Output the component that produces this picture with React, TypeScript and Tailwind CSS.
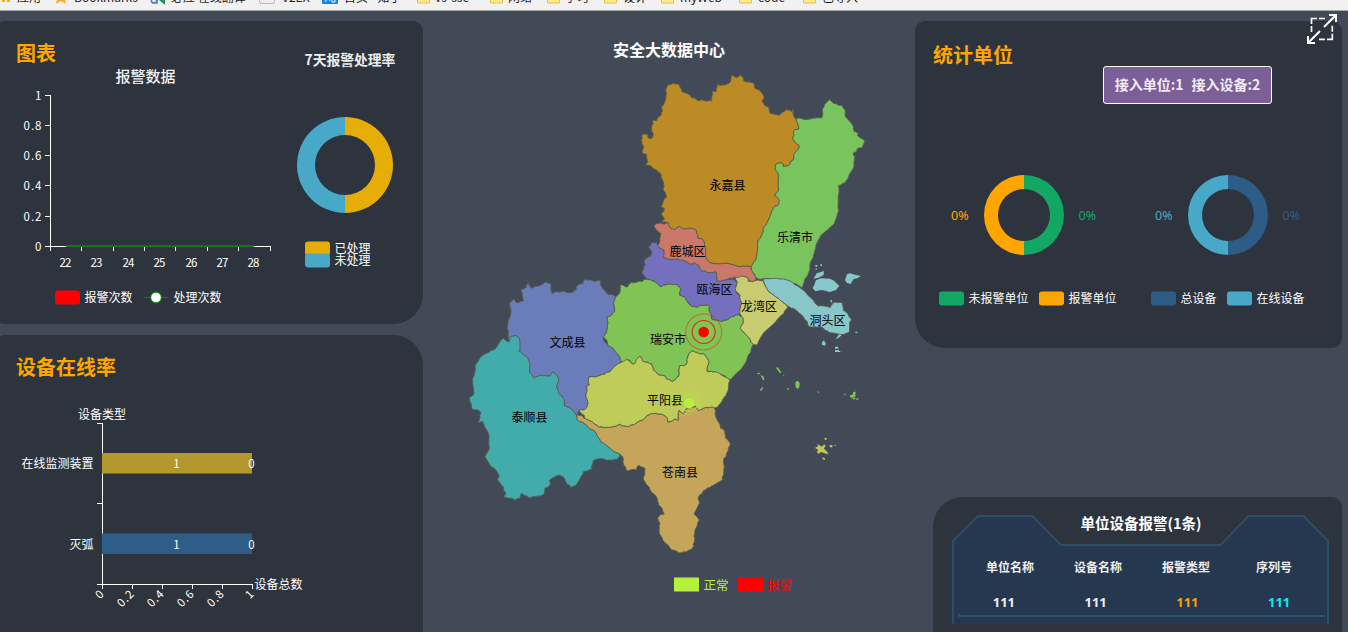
import React from "react";

const CJK = "font-['Noto_Sans_CJK_SC',sans-serif]";

/* ---------- bookmark bar ---------- */

type IconKind = "apps" | "star" | "bing" | "page" | "zhi" | "folder";

const bookmarks: { label: string; icon: IconKind; width: string; gap: string }[] = [
  { label: "应用", icon: "apps", width: "w-[54px]", gap: "gap-[5px]" },
  { label: "Bookmarks", icon: "star", width: "w-[96px]", gap: "gap-[6px]" },
  { label: "必应 在线翻译", icon: "bing", width: "w-[109px]", gap: "gap-[6px]" },
  { label: "V2EX", icon: "page", width: "w-[63px]", gap: "gap-[7px]" },
  { label: "首页 - 知乎", icon: "zhi", width: "w-[95px]", gap: "gap-[6px]" },
  { label: "vs-ssc", icon: "folder", width: "w-[73px]", gap: "gap-[5px]" },
  { label: "网络", icon: "folder", width: "w-[57px]", gap: "gap-[5px]" },
  { label: "学习", icon: "folder", width: "w-[57px]", gap: "gap-[5px]" },
  { label: "设计", icon: "folder", width: "w-[57px]", gap: "gap-[6px]" },
  { label: "myWeb", icon: "folder", width: "w-[78px]", gap: "gap-[6px]" },
  { label: "code", icon: "folder", width: "w-[64px]", gap: "gap-[6px]" },
  { label: "已导入", icon: "folder", width: "w-[64px]", gap: "gap-[6px]" },
];

function BookmarkIcon({ kind }: { kind: IconKind }) {
  switch (kind) {
    case "apps":
      return (
        <svg width="12" height="16" viewBox="0 0 12 16" className="shrink-0">
          <path d="M2 9h3v4H2zM7 9h3v4H7zM2 4h3v3H2zM7 4h3v3H7z" fill="#f5b400" />
        </svg>
      );
    case "star":
      return (
        <svg width="14" height="16" viewBox="0 0 14 16" className="shrink-0">
          <path d="M7 0l2 5h5l-3.500 4L12 15 7 12 2 15l1.500-6L0 5h5z" fill="#fbab2b" />
        </svg>
      );
    case "bing":
      return (
        <svg width="15" height="16" viewBox="0 0 15 16" className="shrink-0">
          <circle cx="4" cy="11.500" r="2.600" fill="none" stroke="#4a86c8" strokeWidth="1.600" />
          <path d="M7 8v7" stroke="#4a86c8" strokeWidth="1.600" />
          <path d="M9 11l6-4v9z" fill="#2e8b57" />
        </svg>
      );
    case "page":
      return (
        <svg width="16" height="16" viewBox="0 0 16 16" className="shrink-0">
          <rect x="0.500" y="0.500" width="15" height="14" rx="2" fill="#eeeeee" stroke="#b5b5b5" />
        </svg>
      );
    case "zhi":
      return (
        <svg width="16" height="16" viewBox="0 0 16 16" className="shrink-0">
          <rect width="16" height="15" rx="1" fill="#0f88eb" />
          <path d="M3 13l3-4 2 3M10 7v6h3V8" stroke="#fff" strokeWidth="1" fill="none" />
        </svg>
      );
    default:
      return (
        <svg width="13" height="16" viewBox="0 0 13 16" className="shrink-0">
          <path d="M0.500 3.500h5l1 2h6v8.500H0.500z" fill="#ffe793" stroke="#e6c14b" />
        </svg>
      );
  }
}

function BookmarkBar() {
  return (
    <header className="h-[11px] shrink-0 overflow-hidden border-b border-[#a5a9a9] bg-[#f1f1f1]">
      <div className="-mt-[12px] flex h-[18px] items-center">
        {bookmarks.map((b) => (
          <div
            key={b.label}
            className={`flex shrink-0 items-center whitespace-nowrap text-[12px] leading-[18px] text-[#222] ${b.width} ${b.gap}`}
          >
            <BookmarkIcon kind={b.icon} />
            <span>{b.label}</span>
          </div>
        ))}
      </div>
    </header>
  );
}

/* ---------- chart helpers ---------- */

/* Axis figures on a fixed six-pixel pitch. */
function Num({ children, ...rest }: { children: string } & Omit<React.SVGProps<SVGTextElement>, "children" | "ref">) {
  return (
    <text
      fontSize="11.500"
      fill="#fff"
      textLength={children.length > 1 ? children.length * 6 : undefined}
      lengthAdjust="spacing"
      {...rest}
    >
      {children}
    </text>
  );
}

function Donut(props: { cx: number; cy: number; outer: number; inner: number; right: string; left: string }) {
  const { cx, cy, outer, inner, right, left } = props;
  const half = (sweep: 0 | 1) =>
    `M${cx} ${cy - outer}A${outer} ${outer} 0 0 ${sweep} ${cx} ${cy + outer}V${cy + inner}A${inner} ${inner} 0 0 ${1 - sweep} ${cx} ${cy - inner}Z`;
  return (
    <g>
      <path d={half(0)} fill={left} />
      <path d={half(1)} fill={right} />
    </g>
  );
}

function Swatch({ x, y, color, label, labelX }: { x: number; y: number; color: string; label: string; labelX: number }) {
  return (
    <g>
      <rect x={x} y={y - 7} width="25" height="14" rx="3" fill={color} />
      <text x={labelX} y={y + 4.8} fontSize="12" fill="#fff">
        {label}
      </text>
    </g>
  );
}

/* ---------- left column ---------- */

function AlarmLineChart() {
  const yTicks: [number, string][] = [
    [95.5, "1"],
    [125.5, "0.8"],
    [155.5, "0.6"],
    [185.5, "0.4"],
    [216.5, "0.2"],
    [246.5, "0"],
  ];
  const xTicks = [50.5, 81.5, 113.5, 144.5, 175.5, 207.5, 238.5, 270.5];
  const days: [number, string][] = [
    [65.5, "22"],
    [96.5, "23"],
    [128.5, "24"],
    [159.5, "25"],
    [191.5, "26"],
    [222.5, "27"],
    [253.5, "28"],
  ];
  return (
    <svg width="285" height="260" viewBox="0 64 285 260">
      <text x="115.500" y="81.500" fontSize="15" fontWeight="500" fill="#f2f2f2">
        报警数据
      </text>
      <path d="M50.500 95V247M50 246.500H271" stroke="#fff" fill="none" />
      {yTicks.map(([y, t]) => (
        <g key={t}>
          <path d={`M45 ${y}H50`} stroke="#fff" />
          <Num x="41.500" y={y + 4} textAnchor="end">
            {t}
          </Num>
        </g>
      ))}
      {xTicks.map((x) => (
        <path key={x} d={`M${x} 246V251`} stroke="#fff" />
      ))}
      {days.map(([x, t]) => (
        <Num key={t} x={x} y="267" textAnchor="middle">
          {t}
        </Num>
      ))}
      <path d="M66 246H254" stroke="#0a7d0a" strokeWidth="2" />
      <Swatch x={55} y={297.5} color="#ff0000" label="报警次数" labelX={84.5} />
      <path d="M143.500 297.500H168.500" stroke="#0a7d0a" />
      <circle cx="156" cy="297.500" r="5.500" fill="#fff" stroke="#0a7d0a" strokeWidth="1.300" />
      <text x="173.500" y="302.300" fontSize="12" fill="#fff">
        处理次数
      </text>
    </svg>
  );
}

function AlarmPanel() {
  return (
    <section className="-ml-[5px] flex h-[303px] w-[428px] shrink-0 rounded-[10px] rounded-br-[30px] bg-[#2e343e] pl-[5px]">
      <div className="w-[285px]">
        <h2 className="h-[43px] pl-[16px] pt-[21px] text-[20px] font-bold leading-[22px] text-[#ffa500]">图表</h2>
        <AlarmLineChart />
      </div>
      <div className="w-[138px]">
        <h3 className="h-[50px] whitespace-nowrap pl-[19.500px] pt-[27px] text-[13.800px] font-bold leading-[22px] text-[#eee]">
          7天报警处理率
        </h3>
        <svg width="138" height="253" viewBox="285 71 138 253">
          <Donut cx={345} cy={165} outer={48} inner={30} right="#e6ad07" left="#47a9c7" />
          <Swatch x={305} y={248.5} color="#e6ad07" label="已处理" labelX={334.5} />
          <Swatch x={305} y={260.5} color="#47a9c7" label="未处理" labelX={334.5} />
        </svg>
      </div>
    </section>
  );
}

function DevicePanel() {
  const ticks: [number, string][] = [
    [102.5, "0"],
    [132.5, "0.2"],
    [162.5, "0.4"],
    [192.5, "0.6"],
    [222.5, "0.8"],
    [252.5, "1"],
  ];
  return (
    <section className="-ml-[5px] mt-[11px] h-[320px] w-[428px] shrink-0 rounded-[10px] rounded-tr-[30px] bg-[#2e343e] pl-[5px]">
      <h2 className="h-[43px] pl-[16px] pt-[21px] text-[20px] font-bold leading-[22px] text-[#ffa500]">设备在线率</h2>
      <svg width="423" height="254" viewBox="0 378 423 254">
        <g fontSize="12" fill="#fff">
          <text x="78" y="418.500">
            设备类型
          </text>
          <text x="93.500" y="468" textAnchor="end">
            在线监测装置
          </text>
          <text x="93.500" y="549" textAnchor="end">
            灭弧
          </text>
          <text x="254.500" y="589">
            设备总数
          </text>
        </g>
        <path d="M102.500 423V585M97 423.500h5M97 503.500h5M97 584.500H253" stroke="#fff" fill="none" />
        <rect x="102" y="453" width="150" height="20.500" fill="#b3962c" />
        <rect x="102" y="533.500" width="150" height="20.500" fill="#2e5d88" />
        <Num x="176.500" y="468" textAnchor="middle">1</Num>
        <Num x="251.500" y="468" textAnchor="middle">0</Num>
        <Num x="176.500" y="549" textAnchor="middle">1</Num>
        <Num x="251.500" y="549" textAnchor="middle">0</Num>
        {ticks.map(([x, t]) => (
          <g key={t}>
            <path d={`M${x} 584V589`} stroke="#fff" />
            <Num x={x + 2} y="595" textAnchor="end" transform={`rotate(-45 ${x + 2} 595)`}>
              {t}
            </Num>
          </g>
        ))}
      </svg>
    </section>
  );
}

/* ---------- map ---------- */

type Region = { name: string; fill: string; origin: [number, number]; pts: string };

/* Outlines are digitised at a third of a pixel, each relative to its own sheet origin. */
const regions: Region[] = [
  {
    name: "yongjia",
    fill: "#bc8b26",
    origin: [630, 60],
    pts: "107,90 115,75 128,70 145,73 152,85 157,96 170,100 185,113 205,122 215,118 230,123 246,122 247,94 260,94 262,74 275,76 290,73 302,64 304,46 318,53 333,46 341,62 357,66 371,70 374,84 391,92 402,108 397,125 414,140 420,160 446,166 468,150 486,155 489,145 489,158 497,176 507,205 492,212 488,235 495,247 508,257 505,268 492,282 492,297 480,312 460,320 455,308 441,310 436,328 446,346 446,390 434,407 447,420 444,436 432,442 420,468 400,503 385,540 380,590 370,608 363,622 340,618 300,612 240,608 232,600 227,570 220,540 203,534 199,512 185,506 165,508 145,500 133,510 122,505 115,488 95,488 103,475 93,462 103,447 92,440 99,425 110,408 100,392 101,372 94,345 75,328 63,318 47,315 53,305 50,283 36,278 41,258 34,240 38,222 52,222 56,235 65,235 70,225 64,205 70,180 80,182 85,172 94,165 95,140 104,125",
  },
  {
    name: "yueqing",
    fill: "#7ac45e",
    origin: [630, 60],
    pts: "499,176 520,178 545,176 575,174 577,150 588,128 600,118 610,130 635,136 645,150 648,172 668,195 672,215 684,217 681,225 704,241 697,262 683,265 680,275 669,280 675,290 672,320 645,368 626,376 624,440 619,475 612,492 585,515 565,540 555,570 545,600 537,635 516,684 490,670 445,658 400,656 380,655 365,630 363,622 370,608 380,590 385,540 400,503 420,468 432,442 444,436 447,420 434,407 446,390 446,346 436,328 441,310 455,308 460,320 480,312 492,297 492,282 505,268 508,257 495,247 488,235 492,212 507,205 497,176",
  },
  {
    name: "ruian",
    fill: "#80c455",
    origin: [630, 210],
    pts: "-30,225 -22,225 -10,232 5,217 35,215 42,207 60,206 75,215 92,230 115,222 140,222 152,238 148,255 165,262 180,285 200,292 212,285 240,290 238,305 246,328 275,334 295,328 305,320 325,314 335,320 340,340 331,355 345,372 370,403 350,450 342,465 300,510 270,492 255,485 232,485 237,455 222,432 205,430 190,423 175,435 170,462 148,468 147,498 126,515 105,498 87,495 70,480 65,462 40,455 30,438 20,455 12,463 -5,448 -10,457 -25,457 -30,445 -50,415 -65,408 -70,390 -80,380 -70,365 -68,345 -70,320 -47,305 -50,280 -44,260 -32,250",
  },
  {
    name: "wencheng",
    fill: "#6a7dba",
    origin: [460, 270],
    pts: "145,205 143,165 153,118 148,100 160,88 170,98 190,92 182,60 195,55 205,38 215,55 235,48 255,37 272,40 275,70 305,65 325,68 348,60 350,48 368,42 375,28 400,33 422,32 425,50 440,70 466,80 460,100 463,125 440,140 442,165 440,185 430,200 445,228 460,235 480,265 485,277 470,285 450,305 420,316 388,320 388,345 378,350 378,380 385,400 375,418 358,420 350,435 335,418 315,408 310,385 295,370 290,350 295,325 280,305 270,318 240,315 222,325 213,312 210,280 200,260 178,245 178,205 165,196 152,200 148,215",
  },
  {
    name: "taishun",
    fill: "#42abac",
    origin: [460, 270],
    pts: "130,205 148,215 152,200 165,196 178,205 178,245 200,260 210,280 213,312 222,325 240,315 270,318 280,305 295,325 290,350 295,370 310,385 315,408 335,418 350,435 352,450 372,460 400,480 422,515 445,530 475,550 480,560 470,568 455,570 430,567 400,572 395,598 370,605 355,635 335,652 320,642 315,628 300,615 268,632 270,645 255,655 252,672 208,683 185,670 180,685 165,690 140,682 132,682 138,670 130,650 112,630 118,618 95,590 75,560 88,535 83,485 68,455 55,458 63,428 35,415 28,385 42,370 38,325 45,290 65,258 105,238",
  },
  {
    name: "cangnan",
    fill: "#c5a559",
    origin: [560, 350],
    pts: "50,195 65,195 72,205 88,210 110,225 140,232 180,222 205,230 240,212 270,193 290,190 315,198 325,217 343,207 355,210 358,180 370,190 388,172 405,168 415,182 437,172 463,172 465,190 482,235 494,242 497,265 511,280 505,300 492,325 491,375 487,390 455,408 430,422 417,437 418,460 402,492 418,510 405,540 403,575 397,595 380,605 355,608 335,600 310,572 298,550 300,520 292,505 300,495 313,492 296,465 293,450 270,420 257,400 250,385 255,355 235,347 228,360 200,362 190,340 188,320 175,310 145,290 122,275 100,240 72,220 52,210",
  },
  {
    name: "pingyang",
    fill: "#bfcc59",
    origin: [560, 350],
    pts: "88,80 120,76 150,65 170,45 185,37 200,28 222,43 240,18 250,35 275,42 280,60 297,75 315,78 336,95 357,78 358,48 380,42 385,15 400,3 415,10 432,12 447,35 442,65 465,65 510,90 500,130 485,155 472,172 437,172 415,182 405,168 388,172 370,190 358,180 355,210 343,207 325,217 315,198 290,190 270,193 240,212 205,230 180,222 140,232 110,225 88,210 72,205 72,195 58,180 75,178 85,160 78,140 78,110 88,105",
  },
  {
    name: "ouhai",
    fill: "#7470bd",
    origin: [630, 210],
    pts: "82,106 80,97 66,98 56,112 66,125 62,138 43,150 46,165 36,190 50,205 72,212 92,230 115,222 140,222 152,238 148,255 165,262 180,285 200,292 212,285 240,290 238,305 246,328 275,334 295,328 305,320 325,314 338,310 330,300 335,280 330,255 320,250 318,235 322,215 305,208 275,212 260,212 258,185 240,188 215,182 205,165 195,158 180,162 155,150 130,148 103,145 102,120",
  },
  {
    name: "lucheng",
    fill: "#cb786b",
    origin: [630, 210],
    pts: "72,45 88,40 103,42 115,38 122,55 133,60 145,50 165,58 185,56 199,62 203,84 220,90 227,120 232,150 240,158 300,162 340,168 363,172 370,190 378,210 355,214 352,203 335,198 310,205 275,212 260,212 258,185 240,188 215,182 205,165 195,158 180,162 155,150 130,148 103,145 102,120 82,106 90,90 92,70 75,55",
  },
  {
    name: "longwan",
    fill: "#c9cb70",
    origin: [630, 210],
    pts: "310,200 335,198 352,203 355,214 378,212 400,212 410,235 445,265 473,290 455,315 410,360 382,405 370,403 345,372 331,355 340,340 335,320 330,300 335,280 330,255 318,245 322,215",
  },
  {
    name: "dongtou",
    fill: "#87c6c9",
    origin: [630, 210],
    pts: "398,208 440,205 480,213 512,235 540,262 565,288 600,293 610,278 636,278 640,300 655,315 664,330 658,365 640,373 600,368 585,360 570,348 537,350 520,320 490,295 473,288 445,265 410,235",
  },
];

type Pt = [number, number];

const noise = (a: number, b: number) => {
  const s = Math.sin(a * 12.9898 + b * 78.233) * 43758.5453;
  return s - Math.floor(s) - 0.5;
};

/* Adds small midpoint offsets that depend only on position, so shared borders stay shared. */
function roughen(p: Pt[], strength: number, limit: number): Pt[] {
  return p.flatMap(([x, y], i): Pt[] => {
    const [nx, ny] = p[(i + 1) % p.length];
    const a = Math.min(limit, Math.hypot(nx - x, ny - y) * strength);
    const mx = Math.round((x + nx) * 8) / 16;
    const my = Math.round((y + ny) * 8) / 16;
    return [
      [x, y],
      [Math.round((mx + noise(mx, my) * a) * 16) / 16, Math.round((my + noise(my, mx) * a) * 16) / 16],
    ];
  });
}

function outline({ origin, pts }: Region) {
  const base = pts.split(" ").map((s): Pt => {
    const [x, y] = s.split(",").map(Number);
    return [x + origin[0] * 3, y + origin[1] * 3];
  });
  return roughen(roughen(base, 0.25, 6), 0.35, 5)
    .map(([x, y]) => `${(x / 3).toFixed(2)},${(y / 3).toFixed(2)}`)
    .join(" ");
}

const labels: [number, number, string][] = [
  [727.5, 190, "永嘉县"],
  [795, 241.5, "乐清市"],
  [687.5, 256, "鹿城区"],
  [714.5, 294, "瓯海区"],
  [759, 311, "龙湾区"],
  [827.5, 325, "洞头区"],
  [668, 344, "瑞安市"],
  [567.5, 347, "文成县"],
  [665, 405, "平阳县"],
  [529.5, 422, "泰顺县"],
  [680, 477, "苍南县"],
];

function CityMap() {
  return (
    <svg width="492" height="551" viewBox="423 65 492 551">
      <g stroke="#5a5f4e" strokeWidth="0.900" strokeLinejoin="round">
        {regions.map((r) => (
          <polygon key={r.name} points={outline(r)} fill={r.fill} />
        ))}
      </g>
      <g transform="translate(630 210) scale(0.33333)" fill="#87c6c9">
        <path d="M548 234l6-12 4-12 16-5 26 1 12 6 16 16-10 12-18 6-25-6-19 4zM550 206l6-9 4-7 22-7-1 12-15 8zM645 210l6-17 9-3 15 4 17 4-9 6-13 4-8 14-12-4zM600 270l7 1-3 9zM576 397l6-6 6 12-5 4-7-3zM617 388l10-15 8 3-10 8zM615 410h10v6h-10zM615 420h12v6h-12zM556 165l6 0 0 5-6 0zM571 163h5v5h-5zM555 177l6-2 0 5zM676 365h6v4h-6z" />
      </g>
      <g transform="translate(560 350) scale(0.33333)" fill="#80c455">
        <path d="M648 53l6-1 10 16-4 2zM591 69l7-1 3 4-8 1zM602 76l8 2 3 12-4 1zM600 120l7-9 3 2-7 11zM706 97l8-5 5 8-1 12-6 5-5-6zM682 114h4v5h-4zM669 73l5 5-3 1zM771 124l7 2-3 3zM851 131l7 1-4 4zM870 136l8-2 2-8 8-1-3 9 3 5-6 2-6 2-6-1zM878 143h8v5h-8zM889 145h6v4h-6z" />
        <path
          d="M765 294l10-6-5-6 8 3 7 5 8-7 4 6-6 6 10 10 5 8-12-3-10-4-10 5-3-6 4-6zM793 264l6-1 1 6-5 1zM808 286l8-1 3 4-7 4zM822 285l6 0-3 4zM785 323l8 0 3 7-5-1z"
          fill="#c4c95a"
        />
        <path d="M825 1h8v5h-8zM836 3h5v3h-5z" fill="#87c6c9" />
      </g>

      <g fontSize="12" fill="#000" textAnchor="middle">
        {labels.map(([x, y, t]) => (
          <text key={t} x={x} y={y}>
            {t}
          </text>
        ))}
      </g>

      <g fill="none" stroke="#e02a14">
        <circle cx="703.700" cy="332" r="11.500" strokeWidth="1.100" />
        <circle cx="703.700" cy="332" r="18" strokeOpacity="0.500" strokeWidth="1.100" />
      </g>
      <circle cx="703.700" cy="332" r="5.300" fill="#ff0000" />
      <g fill="none" stroke="#b5f03a">
        <circle cx="689.300" cy="403" r="8.500" strokeOpacity="0.700" />
        <circle cx="689.300" cy="403" r="11.500" strokeOpacity="0.350" />
      </g>
      <circle cx="689.300" cy="403" r="5.300" fill="#b5f03a" />

      <g fontSize="12.500">
        <rect x="674" y="577.500" width="25" height="14" fill="#b5f03a" />
        <text x="703.500" y="590" fill="#b5f03a">
          正常
        </text>
        <rect x="738" y="577.500" width="25" height="14" fill="#ff0000" />
        <text x="767" y="590" fill="#ff0000">
          报警
        </text>
      </g>
    </svg>
  );
}

/* ---------- right column ---------- */

function FullscreenIcon() {
  return (
    <svg
      width="30"
      height="30"
      viewBox="0 0 30 30"
      fill="none"
      stroke="#fff"
      strokeWidth="2"
      className="absolute right-[11px] top-[14px]"
    >
      <path d="M22 1h7v7M29 1L17 13M8 29H1v-7M1 29L13 17" />
      <path
        d="M4.500 10V4.500h5.500M12 4.500h6M4.500 12v6M25.300 11.700v6M25.300 19.700v5.600h-5.300M18 25.300h-6"
        strokeWidth="1.700"
      />
    </svg>
  );
}

function UnitPanel() {
  return (
    <section className="h-[327px] w-[427px] shrink-0 rounded-[10px] rounded-bl-[30px] bg-[#2e343e]">
      <h2 className="h-[45px] pl-[18px] pt-[23px] text-[20px] font-bold leading-[22px] text-[#ffa500]">统计单位</h2>
      <div className="ml-[188px] flex h-[38px] w-[169px] items-center justify-center gap-[8px] whitespace-nowrap rounded-[3px] border border-white bg-[#7d5f98] pb-[2px] text-[14px] font-bold text-[#f0eaf5]">
        <span>接入单位:1</span>
        <span>接入设备:2</span>
      </div>
      <svg width="427" height="244" viewBox="915 104 427 244">
        <Donut cx={1024} cy={215} outer={40} inner={26} right="#12a762" left="#ffa500" />
        <Donut cx={1228} cy={215} outer={40} inner={26} right="#2d5c87" left="#47a9c7" />
        <g fontFamily="Noto Sans, sans-serif" fontSize="12.500">
          <text x="951" y="220" fill="#ffa500">0%</text>
          <text x="1078.500" y="220" fill="#12a762">0%</text>
          <text x="1155" y="220" fill="#47a9c7">0%</text>
          <text x="1282.500" y="220" fill="#2d5c87">0%</text>
        </g>
        <Swatch x={939} y={298.5} color="#12a762" label="未报警单位" labelX={968.5} />
        <Swatch x={1039} y={298.5} color="#ffa500" label="报警单位" labelX={1068.5} />
        <Swatch x={1151} y={298.5} color="#2d5c87" label="总设备" labelX={1180.5} />
        <Swatch x={1227} y={298.5} color="#47a9c7" label="在线设备" labelX={1256.5} />
      </svg>
    </section>
  );
}

function AlarmTable() {
  return (
    <section className="relative ml-[18px] mt-auto h-[135px] w-[409px] shrink-0 rounded-tl-[30px] rounded-tr-[10px] bg-[#2e343e]">
      <svg width="409" height="135" viewBox="933 497 409 135" className="absolute inset-0">
        <path
          d="M953 624V541L978 516H1032.500L1061 545H1220.500L1248.500 516H1303.500L1328 541V624"
          fill="#263850"
          stroke="#2a4f66"
          strokeWidth="2"
        />
        <path d="M959.500 614V616H1325" stroke="#28546f" strokeWidth="2" fill="none" />
      </svg>
      <div className="relative">
        <h3 className="ml-[7px] pt-[15px] text-center text-[14.500px] font-bold leading-[22px] text-white">
          单位设备报警(1条)
        </h3>
        <div className="ml-[33px] mt-[21px] grid w-[352px] grid-cols-4 text-center text-[12px] font-bold leading-[24px] text-[#eee]">
          <span>单位名称</span>
          <span>设备名称</span>
          <span>报警类型</span>
          <span>序列号</span>
        </div>
        <div className="ml-[25px] mt-[11px] grid w-[367px] grid-cols-4 text-center font-['Noto_Sans',sans-serif] text-[13px] font-bold leading-[24px] text-[#eee]">
          <span>111</span>
          <span>111</span>
          <span className="text-[#f5a010]">111</span>
          <span className="text-[#10e8f0]">111</span>
        </div>
      </div>
    </section>
  );
}

export default function App() {
  return (
    <div className={`relative flex h-[632px] w-[1348px] flex-col overflow-hidden bg-[#424a58] ${CJK}`}>
      <BookmarkBar />
      <main className="flex h-[621px]">
        <div className="flex w-[423px] shrink-0 flex-col pt-[10px]">
          <AlarmPanel />
          <DevicePanel />
        </div>
        <div className="flex w-[492px] shrink-0 flex-col">
          <h1 className="h-[54px] pt-[27px] text-center text-[16px] font-bold leading-[22px] text-white">
            安全大数据中心
          </h1>
          <CityMap />
        </div>
        <div className="flex w-[427px] shrink-0 flex-col pt-[10px]">
          <UnitPanel />
          <AlarmTable />
        </div>
      </main>
      <FullscreenIcon />
    </div>
  );
}
